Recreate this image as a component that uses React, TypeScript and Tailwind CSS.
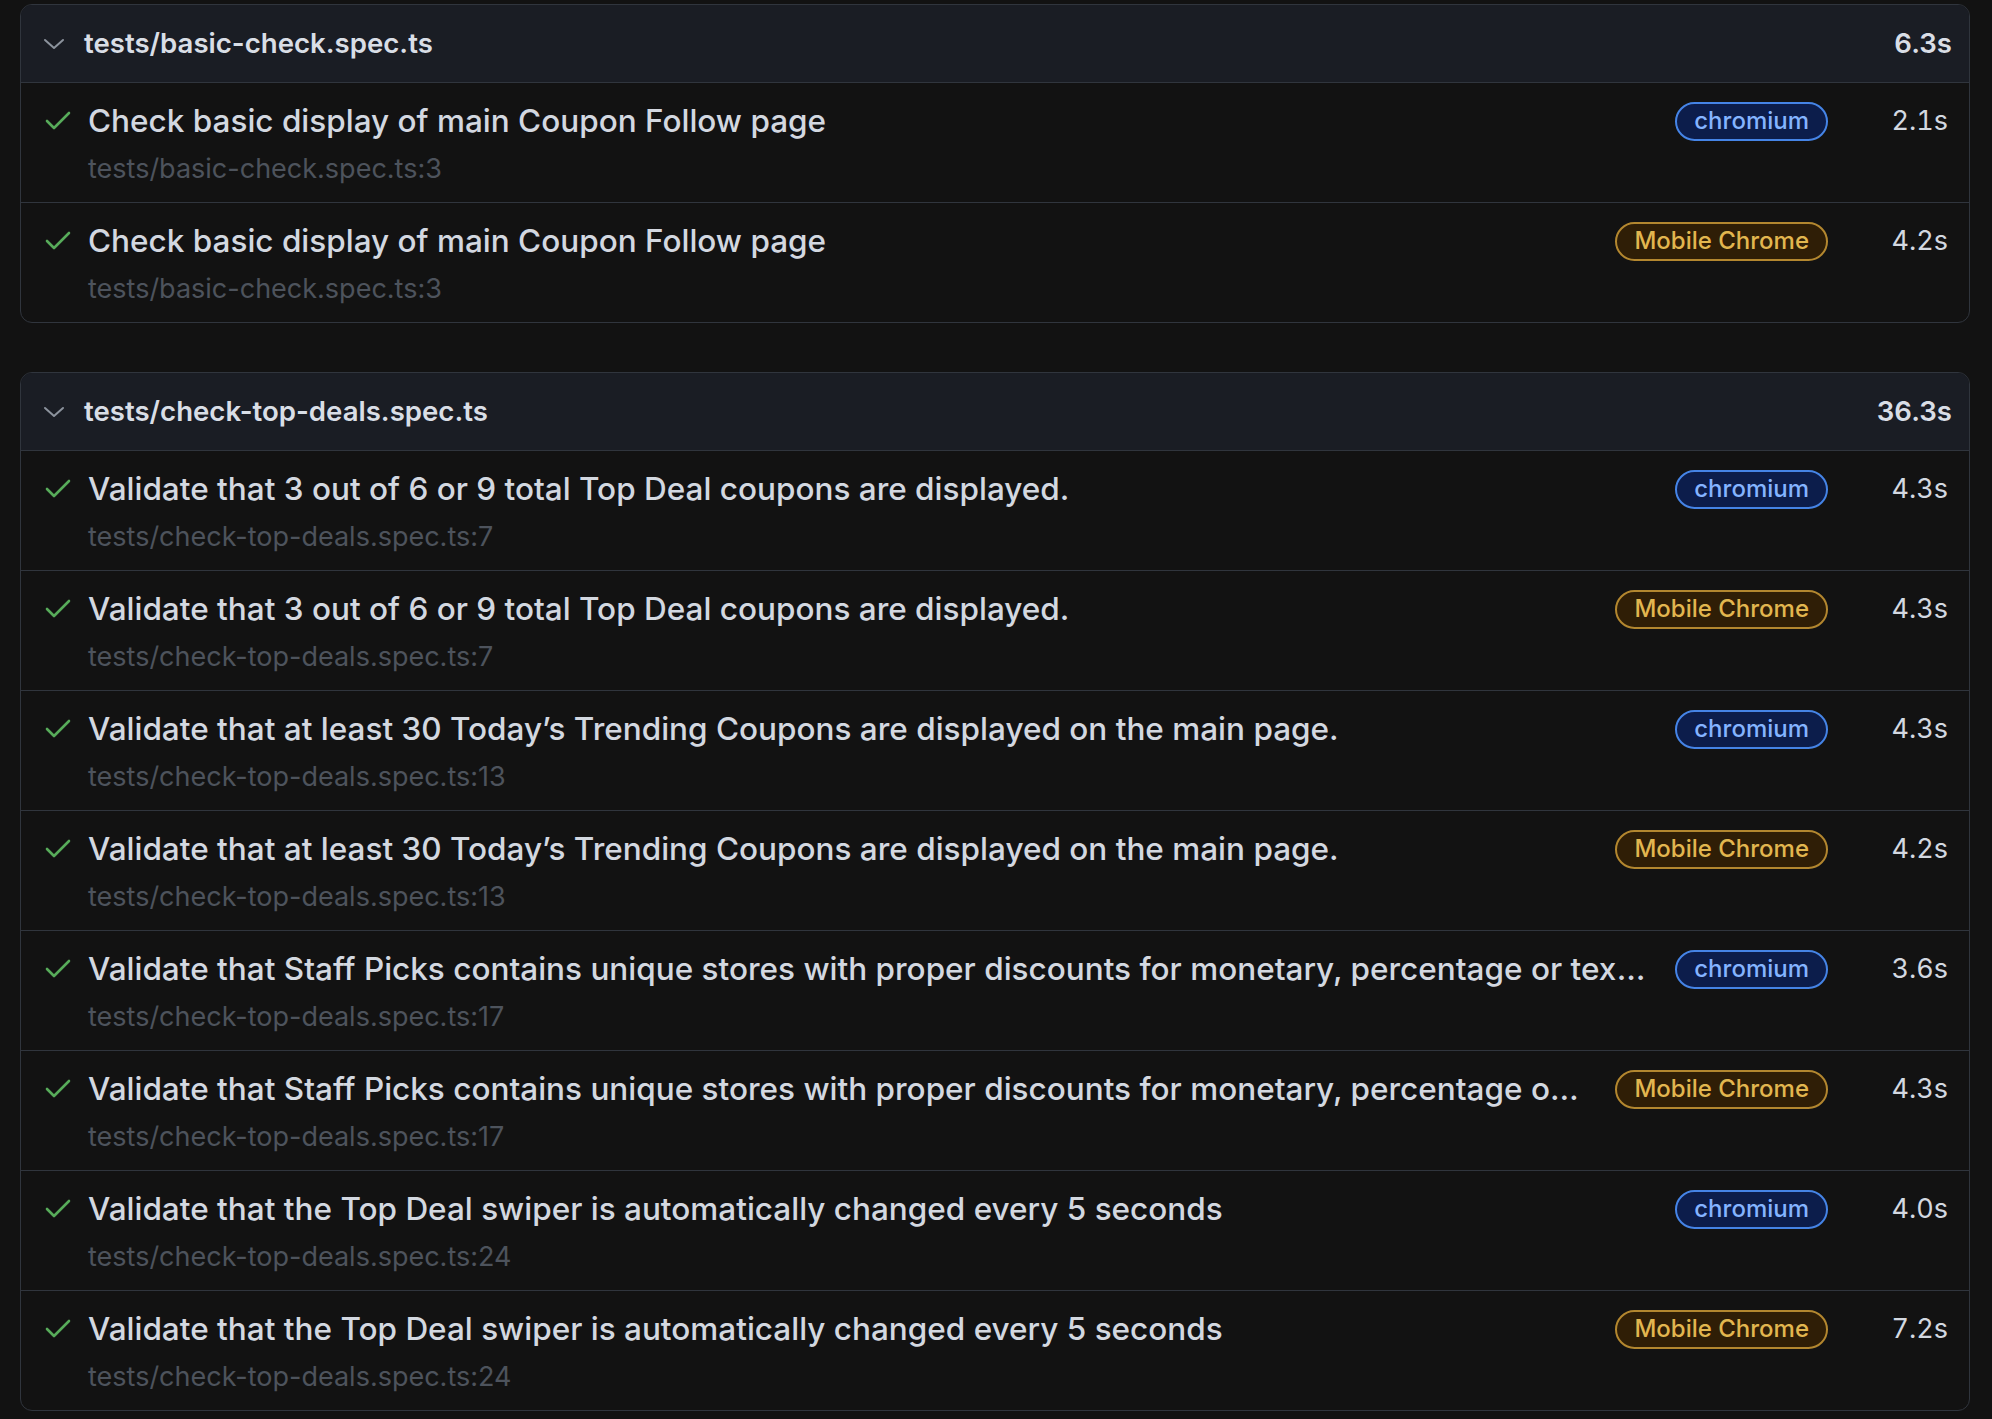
import React from "react";

type Test = { title: string; path: string; project: "chromium" | "Mobile Chrome"; time: string };

const groups: { file: string; time: string; tests: Test[] }[] = [
  {
    file: "tests/basic-check.spec.ts",
    time: "6.3s",
    tests: [
      { title: "Check basic display of main Coupon Follow page", path: "tests/basic-check.spec.ts:3", project: "chromium", time: "2.1s" },
      { title: "Check basic display of main Coupon Follow page", path: "tests/basic-check.spec.ts:3", project: "Mobile Chrome", time: "4.2s" },
    ],
  },
  {
    file: "tests/check-top-deals.spec.ts",
    time: "36.3s",
    tests: [
      { title: "Validate that 3 out of 6 or 9 total Top Deal coupons are displayed.", path: "tests/check-top-deals.spec.ts:7", project: "chromium", time: "4.3s" },
      { title: "Validate that 3 out of 6 or 9 total Top Deal coupons are displayed.", path: "tests/check-top-deals.spec.ts:7", project: "Mobile Chrome", time: "4.3s" },
      { title: "Validate that at least 30 Today\u2019s Trending Coupons are displayed on the main page.", path: "tests/check-top-deals.spec.ts:13", project: "chromium", time: "4.3s" },
      { title: "Validate that at least 30 Today\u2019s Trending Coupons are displayed on the main page.", path: "tests/check-top-deals.spec.ts:13", project: "Mobile Chrome", time: "4.2s" },
      { title: "Validate that Staff Picks contains unique stores with proper discounts for monetary, percentage or text values", path: "tests/check-top-deals.spec.ts:17", project: "chromium", time: "3.6s" },
      { title: "Validate that Staff Picks contains unique stores with proper discounts for monetary, percentage or text values", path: "tests/check-top-deals.spec.ts:17", project: "Mobile Chrome", time: "4.3s" },
      { title: "Validate that the Top Deal swiper is automatically changed every 5 seconds", path: "tests/check-top-deals.spec.ts:24", project: "chromium", time: "4.0s" },
      { title: "Validate that the Top Deal swiper is automatically changed every 5 seconds", path: "tests/check-top-deals.spec.ts:24", project: "Mobile Chrome", time: "7.2s" },
    ],
  },
];

function Chevron() {
  return (
    <svg width="22" height="14" viewBox="0 0 22 14" className="shrink-0">
      <polyline points="2,3 11,11 20,3" fill="none" stroke="#8b929c" strokeWidth="2" strokeLinecap="round" strokeLinejoin="round" />
    </svg>
  );
}

function Check() {
  return (
    <svg width="26" height="20" viewBox="0 0 26 20" className="shrink-0">
      <polyline points="2,10 9,17 24,2" fill="none" stroke="#57ab5a" strokeWidth="2.6" strokeLinecap="round" strokeLinejoin="round" />
    </svg>
  );
}

function Badge({ project }: { project: Test["project"] }) {
  if (project === "chromium") {
    return (
      <span className="shrink-0 h-[39px] px-[17px] flex items-center rounded-full border-2 border-[#4584e6] bg-[#0c1d4b] text-[#84b4ff] text-[24px] font-medium">
        chromium
      </span>
    );
  }
  return (
    <span className="shrink-0 h-[39px] px-[17px] flex items-center rounded-full border-2 border-[#b3872f] bg-[#2f1e06] text-[#e2b64f] text-[24px] font-medium">
      Mobile Chrome
    </span>
  );
}

export default function App() {
  return (
    <div className="min-h-screen bg-[#121212] pl-[20px] pr-[22px] pt-[4px] pb-[10px] flex flex-col gap-[49px]" style={{ fontFamily: "Inter, 'Noto Sans', sans-serif" }}>
      {groups.map((g) => (
        <div key={g.file} className="rounded-[12px] border border-[#30353d] overflow-hidden">
          <div className="h-[77px] bg-[#1a1d24] flex items-center pl-[22px] pr-[17px]">
            <Chevron />
            <span className="ml-[19px] text-[#d9dee6] text-[27.6px] font-semibold">{g.file}</span>
            <span className="ml-auto text-[#d9dee6] text-[27.6px] font-semibold">{g.time}</span>
          </div>
          {g.tests.map((t, i) => (
            <div key={i} className="h-[120px] border-t border-[#30353d] flex items-start pl-[24px] pr-[21px] pt-[18px]">
              <div className="h-[40px] flex items-center">
                <Check />
              </div>
              <div className="ml-[17px] flex-1 min-w-0">
                <div className="leading-[40px] text-[31.5px] font-medium text-[#d3d8e0] truncate">{t.title}</div>
                <div className="mt-[10px] leading-[36px] text-[27px] text-[#4d535c]">{t.path}</div>
              </div>
              <div className="ml-[28px] h-[40px] flex items-center">
                <Badge project={t.project} />
              </div>
              <div className="w-[120px] h-[40px] flex items-center justify-end text-[27px] tabular-nums text-[#d3d8e0]">{t.time}</div>
            </div>
          ))}
        </div>
      ))}
    </div>
  );
}
